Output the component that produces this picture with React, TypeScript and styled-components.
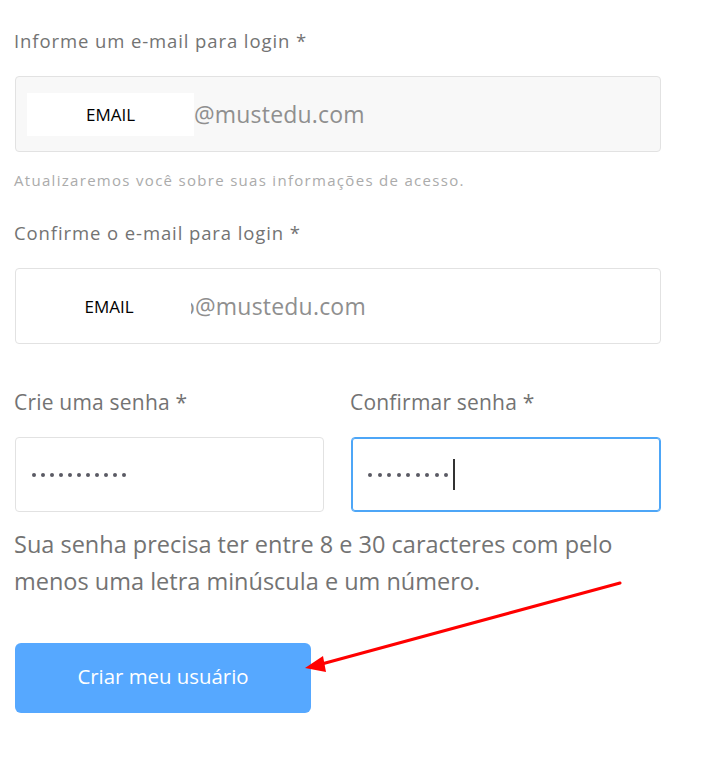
import React from "react";
import styled, { createGlobalStyle } from "styled-components";

const Global = createGlobalStyle`
  html, body { margin: 0; padding: 0; background: #fff; }
  body { font-family: "Open Sans", "Liberation Sans", sans-serif; }
  * { box-sizing: border-box; }
`;

const Page = styled.div`
  position: relative;
  width: 702px;
  height: 758px;
  padding: 28px 41px 0 15px;
  display: flex;
  flex-direction: column;
`;

const Label = styled.div<{ $mt?: number }>`
  font-size: 18.5px;
  letter-spacing: 0.9px;
  line-height: 26px;
  color: #737373;
  margin-left: -1px;
  margin-top: ${(p) => p.$mt ?? 0}px;
  white-space: nowrap;
`;

const Field = styled.div<{ $filled?: boolean; $focus?: boolean; $h?: number; $mt?: number }>`
  height: ${(p) => p.$h ?? 76}px;
  margin-top: ${(p) => p.$mt ?? 0}px;
  border: 1px solid ${(p) => (p.$focus ? "#4da6f7" : "#e2e2e2")};
  box-shadow: ${(p) => (p.$focus ? "inset 0 0 0 1px #4da6f7" : "none")};
  border-radius: 4px;
  background: ${(p) => (p.$filled ? "#f8f8f8" : "#fff")};
  display: flex;
  align-items: center;
  overflow: hidden;
`;

const Redact = styled.div<{ $w: number; $ml: number; $h: number }>`
  position: relative;
  z-index: 1;
  width: ${(p) => p.$w}px;
  height: ${(p) => p.$h}px;
  margin-left: ${(p) => p.$ml}px;
  background: #fff;
  flex-shrink: 0;
  display: flex;
  align-items: center;
  justify-content: center;
  font-size: 17px;
  color: #000;
`;

const Domain = styled.span<{ $ml?: number }>`
  font-size: 23px;
  letter-spacing: 0.2px;
  color: #8f8f8f;
  margin-left: ${(p) => p.$ml ?? 0}px;
  white-space: nowrap;
`;

const Help = styled.div`
  font-size: 15px;
  letter-spacing: 1.3px;
  line-height: 18px;
  color: #ababab;
  margin-top: 19px;
  margin-left: -1px;
  white-space: nowrap;
`;

const Row = styled.div`
  display: grid;
  grid-template-columns: 309px 310px;
  column-gap: 27px;
  margin-top: 45px;
`;

const Col = styled.div`
  display: flex;
  flex-direction: column;
`;

const RowLabel = styled.div`
  font-size: 21px;
  letter-spacing: 0.2px;
  line-height: 26px;
  color: #737373;
  margin-left: -1px;
  margin-bottom: 22px;
  white-space: nowrap;
`;

const Dots = styled.div<{ $gap: number }>`
  display: flex;
  align-items: center;
  gap: ${(p) => p.$gap}px;
  margin-left: 16px;
`;

const Dot = styled.span`
  width: 4px;
  height: 4px;
  border-radius: 50%;
  background: #5a5a64;
`;

const Caret = styled.span`
  width: 2px;
  height: 31px;
  background: #333;
  margin-left: -1px;
`;

const Note = styled.p`
  margin: 14px 0 0 -1px;
  font-size: 23.5px;
  line-height: 37px;
  color: #737373;
  white-space: nowrap;
`;

const Button = styled.button`
  margin-top: 43px;
  width: 296px;
  height: 70px;
  border: none;
  border-radius: 6px;
  background: #56a8ff;
  color: #fff;
  font-family: inherit;
  font-size: 20.4px;
  padding: 0 0 4px;
`;

const Arrow = styled.svg`
  position: absolute;
  left: 0;
  top: 0;
  pointer-events: none;
`;

const dotsRow = (n: number) =>
  Array.from({ length: n }).map((_, i) => <Dot key={i} />);

export default function App() {
  return (
    <>
      <Global />
      <Page>
        <Label>Informe um e-mail para login *</Label>
        <Field $filled $mt={22}>
          <Redact $w={167} $ml={11} $h={43}>EMAIL</Redact>
          <Domain>@mustedu.com</Domain>
        </Field>
        <Help>Atualizaremos você sobre suas informações de acesso.</Help>
        <Label $mt={31}>Confirme o e-mail para login *</Label>
        <Field $mt={22}>
          <Redact $w={164} $ml={11} $h={43}>EMAIL</Redact>
          <Domain $ml={-10}>o@mustedu.com</Domain>
        </Field>
        <Row>
          <Col>
            <RowLabel>Crie uma senha *</RowLabel>
            <Field $h={75}>
              <Dots $gap={5}>{dotsRow(11)}</Dots>
            </Field>
          </Col>
          <Col>
            <RowLabel>Confirmar senha *</RowLabel>
            <Field $h={75} $focus>
              <Dots $gap={5.5}>
                {dotsRow(9)}
                <Caret />
              </Dots>
            </Field>
          </Col>
        </Row>
        <Note>
          Sua senha precisa ter entre 8 e 30 caracteres com pelo
          <br />
          menos uma letra minúscula e um número.
        </Note>
        <Button>Criar meu usuário</Button>
        <Arrow width="702" height="758" viewBox="0 0 702 758">
          <line x1="620" y1="583" x2="318" y2="665" stroke="#ff0000" strokeWidth="3" strokeLinecap="round" />
          <polygon points="305,668 323,656 326,672" fill="#ff0000" />
        </Arrow>
      </Page>
    </>
  );
}
